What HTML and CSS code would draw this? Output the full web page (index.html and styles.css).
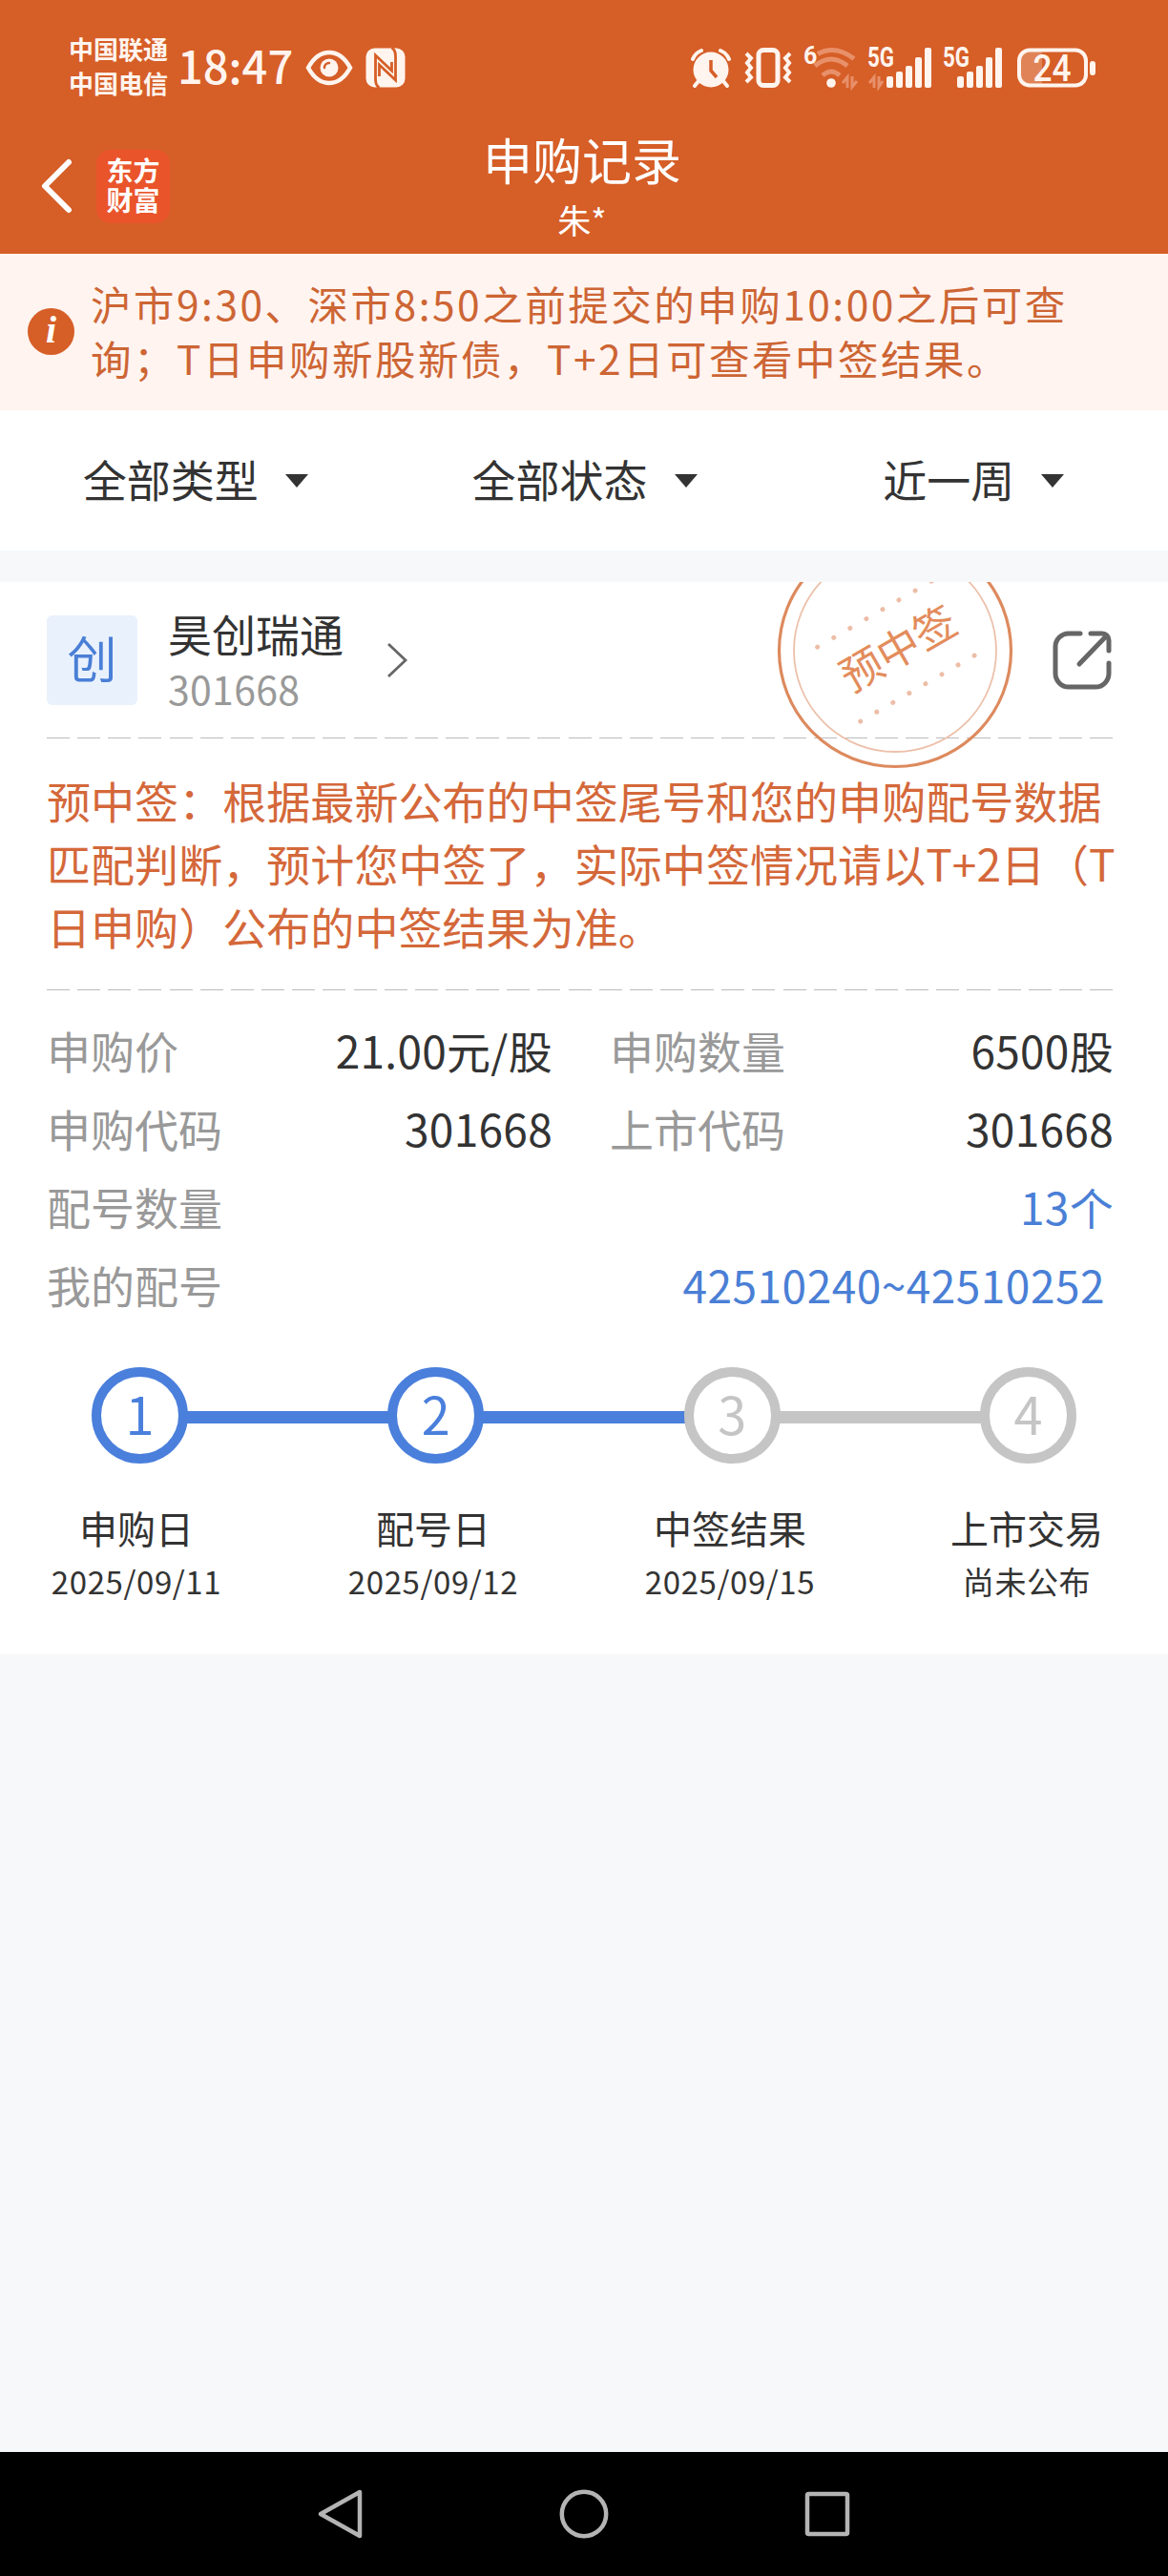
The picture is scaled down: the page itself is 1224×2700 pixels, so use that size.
FILE: index.html
```html
<!DOCTYPE html>
<html lang="zh-CN">
<head>
	<meta charset="UTF-8">
	<meta name="viewport" content="width=device-width, initial-scale=1.0">
	<title>申购记录</title>
	<link rel="stylesheet" href="styles.css">
</head>
<body>
	<header class="header">
		<div class="status">
			<div class="carriers">
				<span>中国联通</span>
				<span>中国电信</span>
			</div>
			<span class="time">18:47</span>
			<svg class="eye" width="50" height="40" viewBox="0 0 50 40">
				<path d="M3 20C9 9 17 4 25 4s16 5 22 16c-6 11-14 16-22 16S9 31 3 20z" fill="none" stroke="#fff4ee" stroke-width="4.5"/>
				<circle cx="25" cy="20" r="9.5" fill="#fff4ee"/>
				<path d="M20 20a5 5 0 0 1 5-5" fill="none" stroke="#d65e27" stroke-width="2.4" stroke-linecap="round"/>
			</svg>
			<svg class="nfc" width="42" height="42" viewBox="0 0 42 42">
				<rect x="0.5" y="0.5" width="41" height="41" rx="9" fill="#fff4ee"/>
				<path d="M14.500 42C11 40 10.500 37 10.500 33V8L27.500 24V15M27.500 0c3.500 2 4 5 4 9v25L14.500 18v12" fill="none" stroke="#d65e27" stroke-width="2.800"/>
			</svg>

			<div class="status-right">
				<svg class="alarm" width="42" height="42" viewBox="0 0 42 42">
					<path d="M2 12a16 16 0 0 1 9-9M40 12a16 16 0 0 0-9-9M8 35l-4 5M34 35l4 5" fill="none" stroke="#fff4ee" stroke-width="4" stroke-linecap="round"/>
					<circle cx="21" cy="23" r="18.500" fill="#fff4ee"/>
					<path d="M21 13v11l6 7" fill="none" stroke="#d65e27" stroke-width="3.500"/>
				</svg>
				<svg class="vibrate" width="50" height="42" viewBox="0 0 50 42">
					<rect x="15" y="2.500" width="20" height="37" rx="5" fill="none" stroke="#fff4ee" stroke-width="5"/>
					<path d="M2 6l5 5-4 5 4 5-4 5 4 5-5 5M48 6l-5 5 4 5-4 5 4 5-4 5 5 5" fill="none" stroke="#fff4ee" stroke-width="4"/>
				</svg>
				<svg class="wifi" width="58" height="44" viewBox="0 0 58 44">
					<text x="0" y="18" class="tiny">6</text>
					<g fill="none" stroke="#e8906a" stroke-width="5">
						<path d="M15 7.500q18-10 38 5"/>
						<path d="M12 20q17-14 34 0"/>
						<path d="M20 30q9-8 18 0"/>
					</g>
					<circle cx="29" cy="38" r="4.800" fill="#fff4ee"/>
					<path d="M46 43V32l-5 6M51 31v11l5-6" fill="none" stroke="#e8906a" stroke-width="3"/>
				</svg>
				<svg class="signal" width="68" height="44" viewBox="0 0 68 44">
					<text x="0" y="21" class="tiny five" textLength="28" lengthAdjust="spacingAndGlyphs">5G</text>
					<path d="M7 43V32l-5 6M12 31v11l4-6" fill="none" stroke="#e8906a" stroke-width="3"/>
					<g fill="#fff4ee">
						<rect x="20" y="31" width="7" height="12" rx="2"/>
						<rect x="30" y="26" width="7" height="17" rx="2"/>
						<rect x="40" y="20" width="7" height="23" rx="2"/>
						<rect x="50" y="11" width="7" height="32" rx="2"/>
						<rect x="60" y="1" width="7" height="42" rx="2"/>
					</g>
				</svg>
				<svg class="signal second" width="63" height="44" viewBox="0 0 63 44">
					<text x="0" y="21" class="tiny five" textLength="28" lengthAdjust="spacingAndGlyphs">5G</text>
					<g fill="#fff4ee">
						<rect x="15" y="31" width="7" height="12" rx="2"/>
						<rect x="25" y="26" width="7" height="17" rx="2"/>
						<rect x="35" y="20" width="7" height="23" rx="2"/>
						<rect x="45" y="11" width="7" height="32" rx="2"/>
						<rect x="55" y="1" width="7" height="42" rx="2"/>
					</g>
				</svg>
				<svg class="battery" width="83" height="42" viewBox="0 0 83 42">
					<path d="M26 3H14A11 11 0 0 0 3 14v14a11 11 0 0 0 11 11h12z" fill="#e08458"/>
					<rect x="2" y="2.500" width="70" height="37" rx="11" fill="none" stroke="#fff4ee" stroke-width="4"/>
					<rect x="76" y="14" width="6" height="15" rx="3" fill="#fff4ee"/>
					<text x="36.500" y="34.500" class="level" textLength="40" lengthAdjust="spacingAndGlyphs">24</text>
				</svg>
			</div>
		</div>

		<div class="titlebar">
			<div class="title-left">
				<svg width="34" height="56" viewBox="0 0 34 56">
					<path d="M30 3L5 28l25 25" fill="none" stroke="#fff" stroke-width="6" stroke-linecap="round" stroke-linejoin="round"/>
				</svg>
				<div class="logo">东方<br>财富</div>
			</div>
			<div class="title">
				<h1>申购记录</h1>
				<p>朱*</p>
			</div>
		</div>
	</header>

	<div class="notice">
		<span class="info">i</span>
		<p>沪市9:30、深市8:50之前提交的申购10:00之后可查<br>询；T日申购新股新债，T+2日可查看中签结果。</p>
	</div>

	<div class="filters">
		<div class="filter">全部类型<i class="arrow"></i></div>
		<div class="filter">全部状态<i class="arrow"></i></div>
		<div class="filter">近一周<i class="arrow"></i></div>
	</div>

	<main class="card">
		<div class="stock">
			<span class="badge">创</span>
			<div class="name">
				<h2>昊创瑞通</h2>
				<p>301668</p>
			</div>
			<svg class="more" width="24" height="40" viewBox="0 0 24 40">
				<path d="M3 3l18 17L3 37" fill="none" stroke="#666" stroke-width="2.800"/>
			</svg>
			<svg class="share" width="64" height="64" viewBox="0 0 64 64">
				<path d="M30 4H18A14 14 0 0 0 4 18v28a14 14 0 0 0 14 14h28a14 14 0 0 0 14-14V35M41 4h12a7 7 0 0 1 7 7v11M57 7L29 36" fill="none" stroke="#666" stroke-width="5" stroke-linecap="round"/>
			</svg>
		</div>

		<!-- cachet "预中签" -->
		<svg class="stamp" width="250" height="250" viewBox="0 0 250 250">
			<circle cx="125" cy="125" r="121.500" fill="none" stroke="#dd8a5e" stroke-width="3.200"/>
			<circle cx="125" cy="125" r="106" fill="none" stroke="#ecc0aa" stroke-width="1.800"/>
			<g transform="rotate(-30 125 125)">
				<path d="M56.500 81H200M56.500 171H195" fill="none" stroke="#edbda6" stroke-width="5" stroke-linecap="round" stroke-dasharray="0 19.700"/>
				<text x="129" y="141" class="stamp-text">预中签</text>
			</g>
		</svg>

		<div class="dashed"></div>
		<p class="tip">预中签：根据最新公布的中签尾号和您的申购配号数据<br>匹配判断，预计您中签了，实际中签情况请以T+2日（T<br>日申购）公布的中签结果为准。</p>
		<div class="dashed"></div>

		<div class="details">
			<div class="row"><span>申购价</span><b>21.00元/股</b></div>
			<div class="row"><span>申购数量</span><b>6500股</b></div>
			<div class="row"><span>申购代码</span><b>301668</b></div>
			<div class="row"><span>上市代码</span><b>301668</b></div>
			<div class="row wide"><span>配号数量</span><b class="blue">13个</b></div>
			<div class="row wide"><span>我的配号</span><b class="blue numbers">42510240~42510252</b></div>
		</div>

		<div class="track">
			<span class="circle done">1</span>
			<span class="line done"></span>
			<span class="circle done">2</span>
			<span class="line done"></span>
			<span class="circle">3</span>
			<span class="line"></span>
			<span class="circle">4</span>
		</div>
		<div class="steps">
			<div class="step"><h3>申购日</h3><p>2025/09/11</p></div>
			<div class="step"><h3>配号日</h3><p>2025/09/12</p></div>
			<div class="step"><h3>中签结果</h3><p>2025/09/15</p></div>
			<div class="step"><h3>上市交易</h3><p>尚未公布</p></div>
		</div>
	</main>

	<nav class="navbar">
		<svg width="52" height="56" viewBox="0 0 52 56">
			<path d="M46 5v46L5 28z" fill="none" stroke="#b4b4b4" stroke-width="4.500" stroke-linejoin="round"/>
		</svg>
		<svg width="52" height="56" viewBox="0 0 52 56">
			<circle cx="26" cy="28" r="23.200" fill="none" stroke="#b4b4b4" stroke-width="4.500"/>
		</svg>
		<svg width="52" height="56" viewBox="0 0 52 56">
			<rect x="5" y="7" width="42" height="42" rx="1.500" fill="none" stroke="#b4b4b4" stroke-width="4.500"/>
		</svg>
	</nav>
</body>
</html>
```

FILE: styles.css
```css
* {
	box-sizing: border-box;
}
body {
	margin: 0;
	height: 2700px;
	display: flex;
	flex-direction: column;
	font-family: "Noto Sans CJK SC", sans-serif;
	font-size: 46px;
	color: #333;
	background-color: #f6f8fa;
}
h1, h2, h3, p {
	margin: 0;
	font-weight: 400;
}
svg {
	display: block;
	flex: none;
	overflow: visible;
}
.header {
	height: 266px;
	background-color: #d65e27;
	color: #fff;
}
.status {
	height: 130px;
	padding: 12px 75px 0 72px;
	display: flex;
	align-items: center;
	color: #fff4ee;
}
.carriers {
	display: flex;
	flex-direction: column;
	width: 104px;
	font-size: 26px;
	font-weight: 700;
	line-height: 36px;
	margin-top: -4px;
}
.time {
	width: 126px;
	margin: -6px 0 0 10px;
	font-size: 47px;
	font-weight: 500;
	line-height: 60px;
}
.eye {
	margin-left: 8px;
}
.nfc {
	margin-left: 13px;
}
.status-right {
	display: flex;
	align-items: center;
	margin-left: auto;
}
.vibrate {
	margin-left: 14px;
}
.wifi {
	margin-left: 12px;
}
.signal {
	margin-left: 9px;
}
.signal.second {
	margin-left: 11px;
}
.battery {
	margin-left: 15px;
}
.tiny {
	font-family: "Roboto", sans-serif;
	font-size: 25px;
	font-weight: 700;
	fill: #fff4ee;
}
.five {
	font-size: 29px;
}
.level {
	font-family: "Roboto", sans-serif;
	font-size: 38px;
	font-weight: 500;
	fill: #fff4ee;
	text-anchor: middle;
}
.titlebar {
	display: grid;
	grid-template-columns: 1fr auto 1fr;
	height: 136px;
	padding: 6px 0 0 42px;
}
.title-left {
	display: flex;
	align-items: center;
	gap: 25px;
	height: 118px;
}
.logo {
	width: 77px;
	height: 77px;
	padding-top: 6px;
	border-radius: 15px;
	background-color: #ea542b;
	font-size: 28px;
	font-weight: 700;
	line-height: 31px;
	text-align: center;
}
.title {
	text-align: center;
	margin-left: -46px;
}
.title h1 {
	font-size: 52px;
	line-height: 62px;
}
.title p {
	margin-top: 12px;
	font-size: 35px;
	line-height: 40px;
}
.notice {
	display: flex;
	height: 164px;
	padding: 23px 0 0 29px;
	background-color: #fff4f0;
	color: #cd6534;
}
.info {
	width: 49px;
	height: 49px;
	margin: 34px 17px 0 0;
	border-radius: 50%;
	background-color: #d65e27;
	color: #fff;
	font: italic 700 40px/46px "Liberation Serif", serif;
	text-align: center;
}
.notice p {
	font-size: 42.5px;
	line-height: 57px;
	letter-spacing: 2.5px;
	white-space: nowrap;
}
.filters {
	display: flex;
	height: 147px;
	padding: 0 0 5px 1px;
	background-color: #fff;
}
.filter {
	flex: 1;
	display: flex;
	align-items: center;
	justify-content: center;
	gap: 28px;
}
.arrow {
	border: 12px solid transparent;
	border-top: 14px solid #333;
	border-bottom: 0;
	margin-top: 5px;
}
.card {
	position: relative;
	height: 1124px;
	margin-top: 33px;
	padding: 0 56px 0 49px;
	overflow: hidden;
	background-color: #fff;
}
.stock {
	display: flex;
	align-items: center;
	height: 163px;
}
.badge {
	width: 95px;
	height: 94px;
	border-radius: 6px;
	background-color: #e9f1fc;
	color: #4a7fd6;
	font-size: 52px;
	line-height: 88px;
	text-align: center;
}
.name {
	width: 228px;
	margin-left: 32px;
}
.name h2 {
	font-size: 46px;
	line-height: 58px;
}
.name p {
	font-size: 41px;
	line-height: 58px;
	letter-spacing: 0.3px;
	color: #999;
}
.share {
	margin: 0 2px 0 auto;
}
/* le tampon passe par-dessus l'en-tête et la ligne */
.stamp {
	position: absolute;
	left: 813px;
	top: -53px;
}
.stamp-text {
	font-size: 44px;
	fill: #e38c5c;
	text-anchor: middle;
}
.dashed {
	height: 1px;
	background: repeating-linear-gradient(to right, #bbb 0, #bbb 24px, transparent 24px, transparent 32.150px);
}
.tip {
	height: 263px;
	padding-top: 31px;
	line-height: 66px;
	letter-spacing: 0.06px;
	color: #d4683a;
	white-space: nowrap;
}
.details {
	display: grid;
	grid-template-columns: 530px 528px;
	column-gap: 60px;
	padding-top: 22px;
}
.row {
	display: flex;
	justify-content: space-between;
	height: 82px;
	line-height: 81px;
}
.row span {
	color: #999;
}
.row b {
	font-weight: 400;
	letter-spacing: 0.3px;
}
.wide {
	grid-column: 1 / 3;
}
.row .blue {
	color: #4a7fd6;
}
.row .numbers {
	margin-right: 9px;
	letter-spacing: 0.5px;
}
.track {
	display: flex;
	align-items: center;
	margin: 45px 40px 0 47px;
}
.circle {
	width: 101px;
	height: 101px;
	border: 10px solid #c5c5c5;
	border-radius: 50%;
	color: #c5c5c5;
	font-size: 54px;
	line-height: 75px;
	text-align: center;
}
.line {
	flex: 1;
	height: 13px;
	margin: 4px -2px 0;
	background-color: #c5c5c5;
}
.circle.done {
	border-color: #4a7fdc;
	color: #4a7fdc;
}
.line.done {
	background-color: #4a7fdc;
}
.steps {
	display: flex;
	justify-content: space-between;
	margin: 39px -9px 0 -7px;
}
.step {
	width: 202px;
	text-align: center;
}
.step h3 {
	font-size: 40px;
	line-height: 56px;
}
.step p {
	font-size: 33px;
	line-height: 57px;
	letter-spacing: 0.6px;
	white-space: nowrap;
}
.navbar {
	display: flex;
	justify-content: center;
	align-items: center;
	gap: 203px;
	height: 130px;
	margin-top: auto;
	background-color: #000;
}
```
